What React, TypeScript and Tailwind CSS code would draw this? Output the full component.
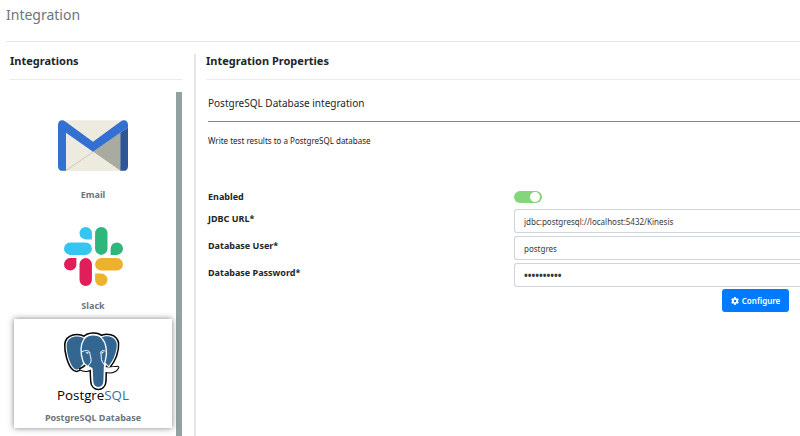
import React, { useState } from "react";

const EmailLogo = () => (
  <svg viewBox="0 0 210 152" className="h-[51px] w-[70px]" aria-hidden="true">
    <path d="M12 0H198V152H12Z" fill="#edebdf" />
    <path d="M105 95 187 38V152Z" fill="#a9aaa0" />
    <path d="M105 95 187 152H24Z" fill="#edebdf" />
    <path d="M24 151 105 95" stroke="#c9c8be" strokeWidth="3" />
    <path d="M187 38 210 22V138Q210 152 196 152H187Z" fill="#2f5795" />
    <path
      d="M0 14C0 0 12-4 22 4L105 65 188 4C198-4 210 0 210 14V22L187 38 105 95 24 38V152H14Q0 152 0 138Z"
      fill="#3470d2"
    />
  </svg>
);

const slackColors = ["#e01e5a", "#36c5f0", "#2eb67d", "#ecb22e"];

const SlackLogo = () => (
  <svg viewBox="0 0 24 24" className="size-[59px]" aria-hidden="true">
    {slackColors.map((color, i) => (
      <g key={color} fill={color} transform={`rotate(${i * 90} 12 12)`}>
        <path d="M5.042 15.165a2.528 2.528 0 0 1-2.52 2.523A2.528 2.528 0 0 1 0 15.165a2.527 2.527 0 0 1 2.522-2.52h2.52v2.52z" />
        <path d="M6.313 15.165a2.527 2.527 0 0 1 2.521-2.52 2.527 2.527 0 0 1 2.521 2.52v6.313A2.528 2.528 0 0 1 8.834 24a2.528 2.528 0 0 1-2.521-2.522v-6.313z" />
      </g>
    ))}
  </svg>
);

const leftEar =
  "M101 39C82 28 52 32 49 57C48 80 57 112 68 126C75 135 83 134 88 127L102 111C92 98 95 58 101 39Z";
const rightEar =
  "M151 37C168 28 195 32 199 54C201 77 190 104 175 122L160 108C166 92 162 52 151 37Z";
const head =
  "M101 41C113 25 143 25 155 39C168 53 171 80 166 101C160 119 163 148 161 169C159 193 129 193 127 169L125 130C119 125 104 125 98 108C90 83 91 57 101 41Z";
const tusks =
  "M104 115C102 123 94 125 88 129C100 137 117 137 125 127M164 127C174 131 188 127 202 126C196 137 181 141 165 138";

const PostgresLogo = () => (
  <svg viewBox="20 20 216 216" className="size-[72px]" role="img">
    <g strokeLinejoin="round" strokeLinecap="round">
      <g fill="#000" stroke="#000" strokeWidth="16">
        <path d={leftEar} />
        <path d={rightEar} />
        <path d={head} />
        <path d={tusks} strokeWidth="10" />
      </g>
      <g fill="#fff" stroke="#fff" strokeWidth="7">
        <path d={leftEar} />
        <path d={rightEar} />
        <path d={head} />
        <path d={tusks} strokeWidth="4" />
      </g>
      <path d={leftEar} fill="#336791" />
      <path d={rightEar} fill="#336791" />
      <path d={head} fill="#336791" stroke="#fff" strokeWidth="4" />
      <path
        d="M96 79C105 73 114 75 118 80C118 91 124 99 122 109C119 117 113 120 110 126M164 77C158 73 152 76 151 82C155 92 150 99 156 110L164 121"
        fill="none"
        stroke="#fff"
        strokeWidth="3"
      />
      <path d="M107 80L115 82 111 85ZM153 81L160 79 157 84Z" fill="#fff" stroke="#fff" />
      <path d="M103 121C98 126 94 127 88 130" stroke="#000" strokeWidth="5" />
    </g>
    <text x="20" y="223" fontSize="40" className="font-['Open_Sans',sans-serif]">
      Postgre<tspan fill="#336fa5">SQL</tspan>
    </text>
  </svg>
);

type IntegrationCardProps = {
  name: string;
  selected?: boolean;
  children: React.ReactNode;
};

const IntegrationCard = ({ name, selected, children }: IntegrationCardProps) => (
  <button
    type="button"
    aria-pressed={!!selected}
    className={
      selected
        ? "flex h-[109px] w-full flex-col items-center justify-end bg-white pb-0.5 shadow-[0_0_6px_rgba(0,0,0,0.5)]"
        : "flex h-[111px] w-full flex-col items-center justify-end"
    }
  >
    <span className={selected ? "flex items-center" : "flex h-[67px] items-center"}>{children}</span>
    <span
      className={
        selected
          ? "mt-1.5 text-[9px] leading-4 font-bold text-[#6c757d]"
          : "mt-2 text-[9px] leading-4 font-bold text-[#6c757d]"
      }
    >
      {name}
    </span>
  </button>
);

type FieldProps = {
  id: string;
  label: string;
  type?: "text" | "password";
  value: string;
};

const Field = ({ id, label, type = "text", value }: FieldProps) => (
  <div className="flex items-start">
    <label htmlFor={id} className="w-[306px] shrink-0 pt-0.5 text-[9px] leading-4 font-bold">
      {label}
    </label>
    <input
      id={id}
      type={type}
      defaultValue={value}
      className={
        type === "password"
          ? "h-6 min-w-0 flex-1 rounded-l-[3px] border border-r-0 border-[#ced4da] bg-white px-[9px] text-[10px] font-bold text-[#343a40] outline-none"
          : "h-6 min-w-0 flex-1 rounded-l-[3px] border border-r-0 border-[#ced4da] bg-white px-[9px] text-[8px] text-[#343a40] outline-none"
      }
    />
  </div>
);

export default function App() {
  const [enabled, setEnabled] = useState(true);

  return (
    <div className="flex h-screen flex-col overflow-hidden bg-white pl-1.5 font-['Noto_Sans',sans-serif] text-[#212529]">
      <header className="border-b border-[#e4e6e8] pt-1 pb-4">
        <h1 className="text-[14px] leading-[21px] text-[#6c757d]">Integration</h1>
      </header>

      <div className="flex min-h-0 flex-1 pt-3">
        <aside className="flex w-[188px] shrink-0 flex-col pr-3 pl-1">
          <h2 className="border-b border-[#e9ebec] pb-[11px] text-[11px] leading-[14px] font-bold">
            Integrations
          </h2>
          <div className="mt-3 flex min-h-0 flex-1 border-r-6 border-[#93a1a1]">
            <div className="flex flex-1 flex-col pr-1 pl-1">
              <IntegrationCard name="Email">
                <EmailLogo />
              </IntegrationCard>
              <IntegrationCard name="Slack">
                <SlackLogo />
              </IntegrationCard>
              <div className="pt-[5px]">
                <IntegrationCard name="PostgreSQL Database" selected>
                  <PostgresLogo />
                </IntegrationCard>
              </div>
            </div>
          </div>
        </aside>

        <main className="min-w-0 flex-1 border-l-2 border-[#e4e6e8] pl-2.5">
          <h2 className="border-b border-[#e9ebec] pb-[11px] text-[11px] leading-[14px] font-bold">
            Integration Properties
          </h2>
          <section className="pl-0.5">
            <h3 className="mt-[15px] border-b border-[#7b8a93] pb-2.5 text-[10px] leading-4">
              PostgreSQL Database integration
            </h3>
            <p className="mt-[11px] text-[8px] leading-4">
              Write test results to a PostgreSQL database
            </p>

            <form className="mt-10 flex flex-col" onSubmit={(e) => e.preventDefault()}>
              <div className="flex items-center pb-1">
                <label htmlFor="enabled" className="w-[306px] shrink-0 text-[9px] leading-4 font-bold">
                  Enabled
                </label>
                <input
                  id="enabled"
                  type="checkbox"
                  role="switch"
                  checked={enabled}
                  onChange={(e) => setEnabled(e.target.checked)}
                  className="flex h-3 w-7 appearance-none items-center rounded-full bg-gray-300 px-0.5 before:size-2.5 before:rounded-full before:bg-white checked:justify-end checked:bg-[#86d57c]"
                />
              </div>
              <div className="flex flex-col gap-[3px]">
                <Field id="jdbc-url" label="JDBC URL*" value="jdbc:postgresql://localhost:5432/Kinesis" />
                <Field id="db-user" label="Database User*" value="postgres" />
                <Field id="db-password" label="Database Password*" type="password" value="kinesis123" />
              </div>
              <div className="flex justify-end pt-0.5 pr-[11px]">
                <button
                  type="submit"
                  className="flex h-[23px] w-[67px] items-center justify-center gap-[3px] rounded-[3px] bg-[#007bff] text-[8px] font-semibold text-white"
                >
                  <svg viewBox="0 0 512 512" className="size-2" fill="currentColor" aria-hidden="true">
                    <path d="M487 316l-43-25c4-23 4-47 0-70l43-25c5-3 7-9 6-14-11-36-30-69-55-96-4-4-10-5-15-2l-43 25c-18-15-39-27-61-35V24c0-6-4-11-9-12-37-8-75-8-110 0-6 1-10 6-10 12v50c-22 8-43 20-61 35L86 84c-5-3-11-2-15 2-25 27-44 60-55 96-2 5 1 11 6 14l43 25c-4 23-4 47 0 70l-43 25c-5 3-8 9-6 14 11 36 30 69 55 96 4 4 10 5 15 2l43-25c18 15 39 27 61 35v50c0 6 4 11 10 12 36 8 74 8 110 0 5-1 9-6 9-12v-50c22-8 43-20 61-35l43 25c5 3 11 2 15-2 25-27 44-60 55-96 1-5-1-11-6-14zM256 336a80 80 0 1 1 0-160 80 80 0 0 1 0 160z" />
                  </svg>
                  Configure
                </button>
              </div>
            </form>
          </section>
        </main>
      </div>
    </div>
  );
}
